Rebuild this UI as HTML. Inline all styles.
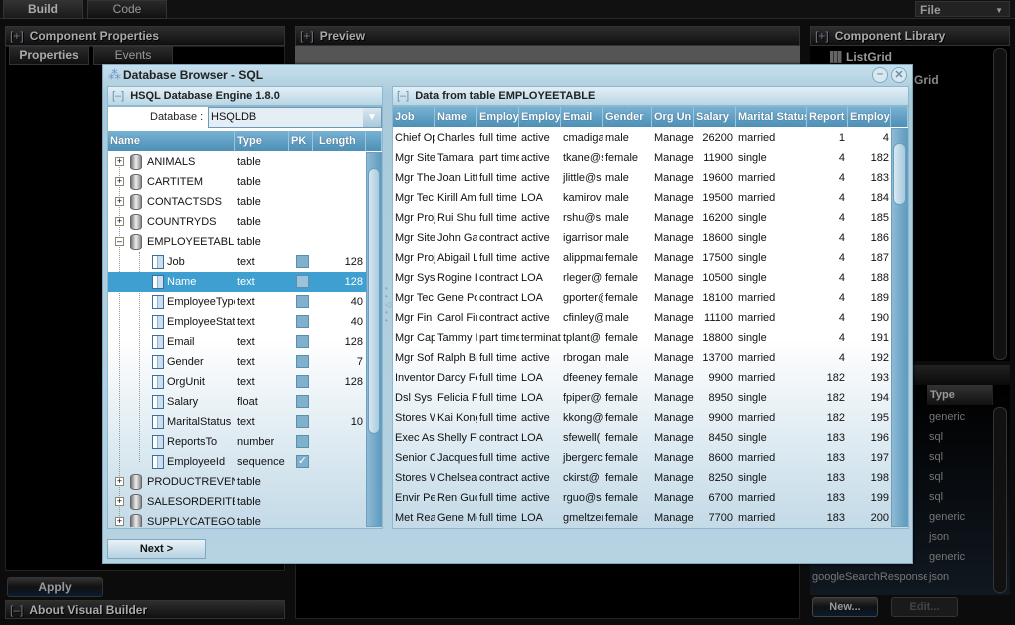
<!DOCTYPE html>
<html style="overflow:hidden"><head><meta charset="utf-8"><style>
*{box-sizing:border-box;margin:0;padding:0}
html,body{width:1015px;height:625px;overflow:hidden}
body{background:#0c0c0c;position:relative;font-family:"Liberation Sans",sans-serif;font-size:11px}
.a{position:absolute}
.dh{position:absolute;background:linear-gradient(#2e2e2e,#101010);border:1px solid #333;color:#aaa;font-weight:bold;font-size:12px;line-height:18px;padding-left:4px;text-shadow:1px 1px #000}
.dh i{font-style:normal;color:#778;font-weight:normal;margin-right:6px}
.tab{position:absolute;background:linear-gradient(#2a2a2a,#111);border:1px solid #333;color:#999;font-size:12px;text-align:center;line-height:17px}
.sh{position:absolute;background:linear-gradient(#e2eff6,#b9d6e5);border:1px solid #8fb8cf;color:#222;font-weight:bold;font-size:11px;line-height:18px;padding-left:4px}
.sh i{font-style:normal;color:#6a8fa8;font-weight:normal;margin-right:6px}
.gh{position:absolute;height:20px;background:linear-gradient(#78b2d2,#4d8fb6);color:#fff;font-weight:bold;font-size:11px;line-height:20px;white-space:nowrap;overflow:hidden;padding-left:2px;border-right:1px solid #9cc6dc;text-shadow:0 0 1px #246}
.r{position:absolute;height:20px;line-height:21px;white-space:nowrap;color:#111}
.c{position:absolute;overflow:hidden;white-space:nowrap;padding-left:2px}
.n{text-align:right;padding-right:3px}
.cb{position:absolute;width:13px;height:13px;background:#7fb1cd;border:1px solid #5b8fae;top:3px;left:188px}
.pl{position:absolute;width:9px;height:9px;border:1px solid #887;background:#fff;font-size:9px;line-height:7px;text-align:center;color:#000;top:5px}
.db{position:absolute;width:12px;height:16px;top:2px;border-radius:5px/3px;background:linear-gradient(90deg,#777,#eee,#888);border:1px solid #666}
.fi{position:absolute;width:12px;height:14px;top:3px;border:1px solid #3b6e9c;background:linear-gradient(90deg,#fff 40%,#3f8fd0 40%,#3f8fd0 45%,#cde 45%);}
</style></head><body>
<div class="a" style="left:0;top:0;width:1015px;height:19px;background:#111;border-bottom:1px solid #2a2a2a"></div>
<div class="tab" style="left:3px;top:0;width:80px;height:19px;color:#aaa;font-weight:bold;background:linear-gradient(#333,#1a1a1a)">Build</div>
<div class="tab" style="left:87px;top:0;width:80px;height:19px">Code</div>
<div class="tab" style="left:915px;top:1px;width:95px;height:16px;text-align:left;padding-left:4px;color:#999;font-weight:bold;background:#222">File<span style="position:absolute;right:6px;font-size:8px">▼</span></div>

<div class="dh" style="left:5px;top:26px;width:280px;height:20px"><i>[+]</i>Component Properties</div>
<div class="a" style="left:5px;top:46px;width:280px;height:525px;background:#000;border:1px solid #222"></div>
<div class="tab" style="left:9px;top:46px;width:80px;height:19px;color:#aaa;font-weight:bold">Properties</div>
<div class="tab" style="left:93px;top:46px;width:80px;height:19px">Events</div>
<div class="a" style="left:7px;top:577px;width:96px;height:20px;border-radius:3px;background:linear-gradient(#333,#111 50%,#0a1a30);border:1px solid #333;color:#999;font-weight:bold;font-size:12px;text-align:center;line-height:18px">Apply</div>
<div class="dh" style="left:5px;top:600px;width:280px;height:19px"><i>[–]</i>About Visual Builder</div>

<div class="dh" style="left:295px;top:26px;width:505px;height:20px"><i>[+]</i>Preview</div>
<div class="a" style="left:295px;top:46px;width:505px;height:20px;background:#555"></div>
<div class="a" style="left:295px;top:563px;width:505px;height:56px;background:#000;border:1px solid #222"></div>

<div class="dh" style="left:810px;top:26px;width:200px;height:20px"><i>[+]</i>Component Library</div>
<div class="a" style="left:810px;top:46px;width:200px;height:315px;background:#000"></div>
<div class="a" style="left:830px;top:51px;width:12px;height:12px;background:repeating-linear-gradient(90deg,#666 0 3px,#333 3px 4px)"></div>
<div class="a" style="left:846px;top:50px;color:#999;font-weight:bold;font-size:12px">ListGrid</div>
<div class="a" style="left:914px;top:73px;color:#888;font-weight:bold;font-size:12px">Grid</div>
<div class="a" style="left:993px;top:48px;width:14px;height:312px;background:#111;border:1px solid #333;border-radius:6px"></div>
<div class="a" style="left:810px;top:365px;width:200px;height:20px;background:linear-gradient(#222,#0a0a0a)"></div>
<div class="a" style="left:810px;top:385px;width:200px;height:210px;background:linear-gradient(#000,#101820)"></div>
<div class="gh" style="left:927px;top:385px;width:66px;background:linear-gradient(#333,#111);color:#999;text-shadow:none;border-color:#222;padding-left:3px">Type</div>
<div class="a" style="left:929px;top:407px;color:#777;line-height:20px">generic<br>sql<br>sql<br>sql<br>sql<br>generic<br>json<br>generic<br>json</div>
<div class="a" style="left:812px;top:567px;width:115px;overflow:hidden;white-space:nowrap;color:#777;line-height:20px">googleSearchResponse</div>
<div class="a" style="left:993px;top:407px;width:14px;height:186px;background:#111;border:1px solid #333;border-radius:6px"></div>
<div class="a" style="left:812px;top:597px;width:66px;height:20px;border-radius:3px;background:linear-gradient(#333,#111 50%,#0a1a30);border:1px solid #444;color:#999;font-weight:bold;text-align:center;line-height:18px">New...</div>
<div class="a" style="left:891px;top:597px;width:67px;height:20px;border-radius:3px;background:#1a1a1a;border:1px solid #333;color:#444;font-weight:bold;text-align:center;line-height:18px">Edit...</div>

<div class="a" style="left:102px;top:64px;width:811px;height:500px;background:linear-gradient(#c6dfec,#a9cadb 30px,#b7d3e2);border:1px solid #7fa9c2;box-shadow:0 0 3px #000"></div>
<div class="a" style="left:108px;top:67px;color:#6c97c4;font-size:13px">⁂</div>
<div class="a" style="left:123px;top:68px;color:#222;font-weight:bold;font-size:12px">Database Browser - SQL</div>
<div class="a" style="left:872px;top:67px;width:16px;height:16px;border-radius:50%;background:#d8e8f0;border:1px solid #7fa9c2;text-align:center;line-height:13px;color:#6a8fa8;font-weight:bold">–</div>
<div class="a" style="left:891px;top:67px;width:16px;height:16px;border-radius:50%;background:#d8e8f0;border:1px solid #7fa9c2;text-align:center;line-height:14px;color:#6a8fa8;font-weight:bold;font-size:11px">✕</div>

<div class="sh" style="left:107px;top:86px;width:276px;height:20px"><i>[–]</i>HSQL Database Engine 1.8.0</div>
<div class="a" style="left:107px;top:106px;width:276px;height:423px;background:linear-gradient(#fff 55%,#c3dae7);border:1px solid #8fb8cf"></div>
<div class="a" style="left:150px;top:111px;color:#222">Database :</div>
<div class="a" style="left:208px;top:107px;width:174px;height:21px;background:#e4eef4;border:1px solid #6b9ab6;padding-left:2px;line-height:19px;color:#111">HSQLDB</div>
<div class="a" style="left:363px;top:108px;width:18px;height:19px;background:linear-gradient(#d9e8f0,#aac8d9);color:#fff;text-align:center;line-height:19px;font-size:10px">▼</div>
<div class="gh" style="left:108px;top:131px;width:127px">Name</div>
<div class="gh" style="left:235px;top:131px;width:54px">Type</div>
<div class="gh" style="left:289px;top:131px;width:24px">PK</div>
<div class="gh" style="left:313px;top:131px;width:53px;padding-left:6px">Length</div>
<div class="gh" style="left:366px;top:131px;width:16px"></div>
<div class="a" style="left:366px;top:152px;width:16px;height:375px;background:linear-gradient(90deg,#8fbad4,#5f9bbf);border:1px solid #6a9fc0"></div>
<div class="a" style="left:368px;top:168px;width:12px;height:266px;border-radius:6px;background:linear-gradient(90deg,#d8e8f0,#a8cade);border:1px solid #6a9fc0"></div>
<div class="a" style="left:108px;top:152px;width:258px;height:375px;overflow:hidden">
<div class="a" style="left:11px;top:10px;height:372px;border-left:1px dotted #998"></div>
<div class="a" style="left:31px;top:100px;height:210px;border-left:1px dotted #998"></div>
<div class="r" style="top:0;width:258px"><div class="pl" style="left:7px">+</div><div class="db" style="left:22px"></div><span class="c" style="left:37px;width:90px">ANIMALS</span><span class="c" style="left:127px">table</span></div>
<div class="r" style="top:20px;width:258px"><div class="pl" style="left:7px">+</div><div class="db" style="left:22px"></div><span class="c" style="left:37px;width:90px">CARTITEM</span><span class="c" style="left:127px">table</span></div>
<div class="r" style="top:40px;width:258px"><div class="pl" style="left:7px">+</div><div class="db" style="left:22px"></div><span class="c" style="left:37px;width:90px">CONTACTSDS</span><span class="c" style="left:127px">table</span></div>
<div class="r" style="top:60px;width:258px"><div class="pl" style="left:7px">+</div><div class="db" style="left:22px"></div><span class="c" style="left:37px;width:90px">COUNTRYDS</span><span class="c" style="left:127px">table</span></div>
<div class="r" style="top:80px;width:258px"><div class="pl" style="left:7px">–</div><div class="db" style="left:22px"></div><span class="c" style="left:37px;width:90px">EMPLOYEETABLE</span><span class="c" style="left:127px">table</span></div>
<div class="r" style="top:100px;width:258px"><div class="fi" style="left:44px"></div><span class="c" style="left:57px;width:70px">Job</span><span class="c" style="left:127px">text</span><div class="cb"></div><span class="c n" style="left:205px;width:53px">128</span></div>
<div class="r" style="top:120px;width:258px;background:#3f9fd0;color:#fff"><div class="fi" style="left:44px"></div><span class="c" style="left:57px;width:70px">Name</span><span class="c" style="left:127px">text</span><div class="cb" style="background:#9cc3d9"></div><span class="c n" style="left:205px;width:53px">128</span></div>
<div class="r" style="top:140px;width:258px"><div class="fi" style="left:44px"></div><span class="c" style="left:57px;width:70px">EmployeeType</span><span class="c" style="left:127px">text</span><div class="cb"></div><span class="c n" style="left:205px;width:53px">40</span></div>
<div class="r" style="top:160px;width:258px"><div class="fi" style="left:44px"></div><span class="c" style="left:57px;width:70px">EmployeeStatus</span><span class="c" style="left:127px">text</span><div class="cb"></div><span class="c n" style="left:205px;width:53px">40</span></div>
<div class="r" style="top:180px;width:258px"><div class="fi" style="left:44px"></div><span class="c" style="left:57px;width:70px">Email</span><span class="c" style="left:127px">text</span><div class="cb"></div><span class="c n" style="left:205px;width:53px">128</span></div>
<div class="r" style="top:200px;width:258px"><div class="fi" style="left:44px"></div><span class="c" style="left:57px;width:70px">Gender</span><span class="c" style="left:127px">text</span><div class="cb"></div><span class="c n" style="left:205px;width:53px">7</span></div>
<div class="r" style="top:220px;width:258px"><div class="fi" style="left:44px"></div><span class="c" style="left:57px;width:70px">OrgUnit</span><span class="c" style="left:127px">text</span><div class="cb"></div><span class="c n" style="left:205px;width:53px">128</span></div>
<div class="r" style="top:240px;width:258px"><div class="fi" style="left:44px"></div><span class="c" style="left:57px;width:70px">Salary</span><span class="c" style="left:127px">float</span><div class="cb"></div></div>
<div class="r" style="top:260px;width:258px"><div class="fi" style="left:44px"></div><span class="c" style="left:57px;width:70px">MaritalStatus</span><span class="c" style="left:127px">text</span><div class="cb"></div><span class="c n" style="left:205px;width:53px">10</span></div>
<div class="r" style="top:280px;width:258px"><div class="fi" style="left:44px"></div><span class="c" style="left:57px;width:70px">ReportsTo</span><span class="c" style="left:127px">number</span><div class="cb"></div></div>
<div class="r" style="top:300px;width:258px"><div class="fi" style="left:44px"></div><span class="c" style="left:57px;width:70px">EmployeeId</span><span class="c" style="left:127px">sequence</span><div class="cb" style="color:#fff;font-size:11px;line-height:11px;text-align:center">✓</div></div>
<div class="r" style="top:320px;width:258px"><div class="pl" style="left:7px">+</div><div class="db" style="left:22px"></div><span class="c" style="left:37px;width:90px">PRODUCTREVENUE</span><span class="c" style="left:127px">table</span></div>
<div class="r" style="top:340px;width:258px"><div class="pl" style="left:7px">+</div><div class="db" style="left:22px"></div><span class="c" style="left:37px;width:90px">SALESORDERITEM</span><span class="c" style="left:127px">table</span></div>
<div class="r" style="top:360px;width:258px"><div class="pl" style="left:7px">+</div><div class="db" style="left:22px"></div><span class="c" style="left:37px;width:90px">SUPPLYCATEGORY</span><span class="c" style="left:127px">table</span></div>
</div>
<div class="a" style="left:107px;top:539px;width:99px;height:20px;background:linear-gradient(#e8f2f7,#b6d2e1);border:1px solid #7fa9c2;font-weight:bold;text-align:center;line-height:18px;color:#111">Next &gt;</div>

<div class="sh" style="left:392px;top:86px;width:517px;height:20px"><i>[–]</i>Data from table EMPLOYEETABLE</div>
<div class="a" style="left:392px;top:106px;width:517px;height:423px;background:linear-gradient(#fff 55%,#c3dae7);border:1px solid #8fb8cf"></div>
<div class="gh" style="left:393px;top:107px;width:42px">Job</div>
<div class="gh" style="left:435px;top:107px;width:42px">Name</div>
<div class="gh" style="left:477px;top:107px;width:42px">Employ</div>
<div class="gh" style="left:519px;top:107px;width:42px">Employ</div>
<div class="gh" style="left:561px;top:107px;width:42px">Email</div>
<div class="gh" style="left:603px;top:107px;width:49px">Gender</div>
<div class="gh" style="left:652px;top:107px;width:42px">Org Un</div>
<div class="gh" style="left:694px;top:107px;width:42px">Salary</div>
<div class="gh" style="left:736px;top:107px;width:71px">Marital Status</div>
<div class="gh" style="left:807px;top:107px;width:41px">Report</div>
<div class="gh" style="left:848px;top:107px;width:43px">Employ</div>
<div class="gh" style="left:891px;top:107px;width:17px"></div>
<div class="a" style="left:891px;top:128px;width:17px;height:399px;background:linear-gradient(90deg,#8fbad4,#5f9bbf);border:1px solid #6a9fc0"></div>
<div class="a" style="left:893px;top:143px;width:13px;height:62px;border-radius:6px;background:linear-gradient(90deg,#d8e8f0,#a8cade);border:1px solid #6a9fc0"></div>
<div class="a" style="left:385px;top:285px;width:6px;height:40px;color:#7fa9c2;font-size:8px;line-height:8px">•<br>•<br>◁<br>•<br>•</div>
<div class="a" id="g" style="left:393px;top:128px;width:498px;height:399px;overflow:hidden">
<style>
#g .r{width:498px}
#g .c:nth-child(1){left:0;width:42px}#g .c:nth-child(2){left:42px;width:42px}#g .c:nth-child(3){left:84px;width:42px}#g .c:nth-child(4){left:126px;width:42px}#g .c:nth-child(5){left:168px;width:42px}#g .c:nth-child(6){left:210px;width:49px}#g .c:nth-child(7){left:259px;width:42px}#g .c:nth-child(8){left:301px;width:42px;text-align:right;padding-right:3px}#g .c:nth-child(9){left:343px;width:71px}#g .c:nth-child(10){left:414px;width:41px;text-align:right;padding-right:3px}#g .c:nth-child(11){left:455px;width:43px;text-align:right;padding-right:2px}
</style>
<div class="r" style="top:0"><span class="c">Chief Operating</span><span class="c">Charles Madigan</span><span class="c">full time</span><span class="c">active</span><span class="c">cmadigan@</span><span class="c">male</span><span class="c">Management</span><span class="c">26200</span><span class="c">married</span><span class="c">1</span><span class="c">4</span></div>
<div class="r" style="top:20px"><span class="c">Mgr Site</span><span class="c">Tamara Kane</span><span class="c">part time</span><span class="c">active</span><span class="c">tkane@s</span><span class="c">female</span><span class="c">Management</span><span class="c">11900</span><span class="c">single</span><span class="c">4</span><span class="c">182</span></div>
<div class="r" style="top:40px"><span class="c">Mgr The</span><span class="c">Joan Little</span><span class="c">full time</span><span class="c">active</span><span class="c">jlittle@s</span><span class="c">male</span><span class="c">Management</span><span class="c">19600</span><span class="c">married</span><span class="c">4</span><span class="c">183</span></div>
<div class="r" style="top:60px"><span class="c">Mgr Tec</span><span class="c">Kirill Amirov</span><span class="c">full time</span><span class="c">LOA</span><span class="c">kamirov</span><span class="c">male</span><span class="c">Management</span><span class="c">19500</span><span class="c">married</span><span class="c">4</span><span class="c">184</span></div>
<div class="r" style="top:80px"><span class="c">Mgr Proj</span><span class="c">Rui Shu</span><span class="c">full time</span><span class="c">active</span><span class="c">rshu@s</span><span class="c">male</span><span class="c">Management</span><span class="c">16200</span><span class="c">single</span><span class="c">4</span><span class="c">185</span></div>
<div class="r" style="top:100px"><span class="c">Mgr Site</span><span class="c">John Garrison</span><span class="c">contract</span><span class="c">active</span><span class="c">igarrison</span><span class="c">male</span><span class="c">Management</span><span class="c">18600</span><span class="c">single</span><span class="c">4</span><span class="c">186</span></div>
<div class="r" style="top:120px"><span class="c">Mgr Proj</span><span class="c">Abigail L</span><span class="c">full time</span><span class="c">active</span><span class="c">alippman</span><span class="c">female</span><span class="c">Management</span><span class="c">17500</span><span class="c">single</span><span class="c">4</span><span class="c">187</span></div>
<div class="r" style="top:140px"><span class="c">Mgr Sys</span><span class="c">Rogine Leger</span><span class="c">contract</span><span class="c">LOA</span><span class="c">rleger@</span><span class="c">female</span><span class="c">Management</span><span class="c">10500</span><span class="c">single</span><span class="c">4</span><span class="c">188</span></div>
<div class="r" style="top:160px"><span class="c">Mgr Tec</span><span class="c">Gene Porter</span><span class="c">contract</span><span class="c">LOA</span><span class="c">gporter@</span><span class="c">female</span><span class="c">Management</span><span class="c">18100</span><span class="c">married</span><span class="c">4</span><span class="c">189</span></div>
<div class="r" style="top:180px"><span class="c">Mgr Fin</span><span class="c">Carol Finley</span><span class="c">contract</span><span class="c">active</span><span class="c">cfinley@</span><span class="c">male</span><span class="c">Management</span><span class="c">11100</span><span class="c">married</span><span class="c">4</span><span class="c">190</span></div>
<div class="r" style="top:200px"><span class="c">Mgr Cap</span><span class="c">Tammy Plant</span><span class="c">part time</span><span class="c">terminated</span><span class="c">tplant@</span><span class="c">female</span><span class="c">Management</span><span class="c">18800</span><span class="c">single</span><span class="c">4</span><span class="c">191</span></div>
<div class="r" style="top:220px"><span class="c">Mgr Sof</span><span class="c">Ralph Brogan</span><span class="c">full time</span><span class="c">active</span><span class="c">rbrogan</span><span class="c">male</span><span class="c">Management</span><span class="c">13700</span><span class="c">married</span><span class="c">4</span><span class="c">192</span></div>
<div class="r" style="top:240px"><span class="c">Inventory</span><span class="c">Darcy Feeney</span><span class="c">full time</span><span class="c">LOA</span><span class="c">dfeeney</span><span class="c">female</span><span class="c">Management</span><span class="c">9900</span><span class="c">married</span><span class="c">182</span><span class="c">193</span></div>
<div class="r" style="top:260px"><span class="c">Dsl Sys</span><span class="c">Felicia Piper</span><span class="c">full time</span><span class="c">LOA</span><span class="c">fpiper@</span><span class="c">female</span><span class="c">Management</span><span class="c">8950</span><span class="c">single</span><span class="c">182</span><span class="c">194</span></div>
<div class="r" style="top:280px"><span class="c">Stores W</span><span class="c">Kai Kong</span><span class="c">full time</span><span class="c">active</span><span class="c">kkong@</span><span class="c">female</span><span class="c">Management</span><span class="c">9900</span><span class="c">married</span><span class="c">182</span><span class="c">195</span></div>
<div class="r" style="top:300px"><span class="c">Exec As</span><span class="c">Shelly Fewell</span><span class="c">contract</span><span class="c">LOA</span><span class="c">sfewell(</span><span class="c">female</span><span class="c">Management</span><span class="c">8450</span><span class="c">single</span><span class="c">183</span><span class="c">196</span></div>
<div class="r" style="top:320px"><span class="c">Senior C</span><span class="c">Jacques</span><span class="c">full time</span><span class="c">active</span><span class="c">jbergerc</span><span class="c">female</span><span class="c">Management</span><span class="c">8600</span><span class="c">married</span><span class="c">183</span><span class="c">197</span></div>
<div class="r" style="top:340px"><span class="c">Stores W</span><span class="c">Chelsea</span><span class="c">contract</span><span class="c">active</span><span class="c">ckirst@</span><span class="c">female</span><span class="c">Management</span><span class="c">8250</span><span class="c">single</span><span class="c">183</span><span class="c">198</span></div>
<div class="r" style="top:360px"><span class="c">Envir Pe</span><span class="c">Ren Guo</span><span class="c">full time</span><span class="c">active</span><span class="c">rguo@s</span><span class="c">female</span><span class="c">Management</span><span class="c">6700</span><span class="c">married</span><span class="c">183</span><span class="c">199</span></div>
<div class="r" style="top:380px"><span class="c">Met Rea</span><span class="c">Gene Meltzer</span><span class="c">full time</span><span class="c">LOA</span><span class="c">gmeltzer</span><span class="c">female</span><span class="c">Management</span><span class="c">7700</span><span class="c">married</span><span class="c">183</span><span class="c">200</span></div>
</div>
</body></html>
